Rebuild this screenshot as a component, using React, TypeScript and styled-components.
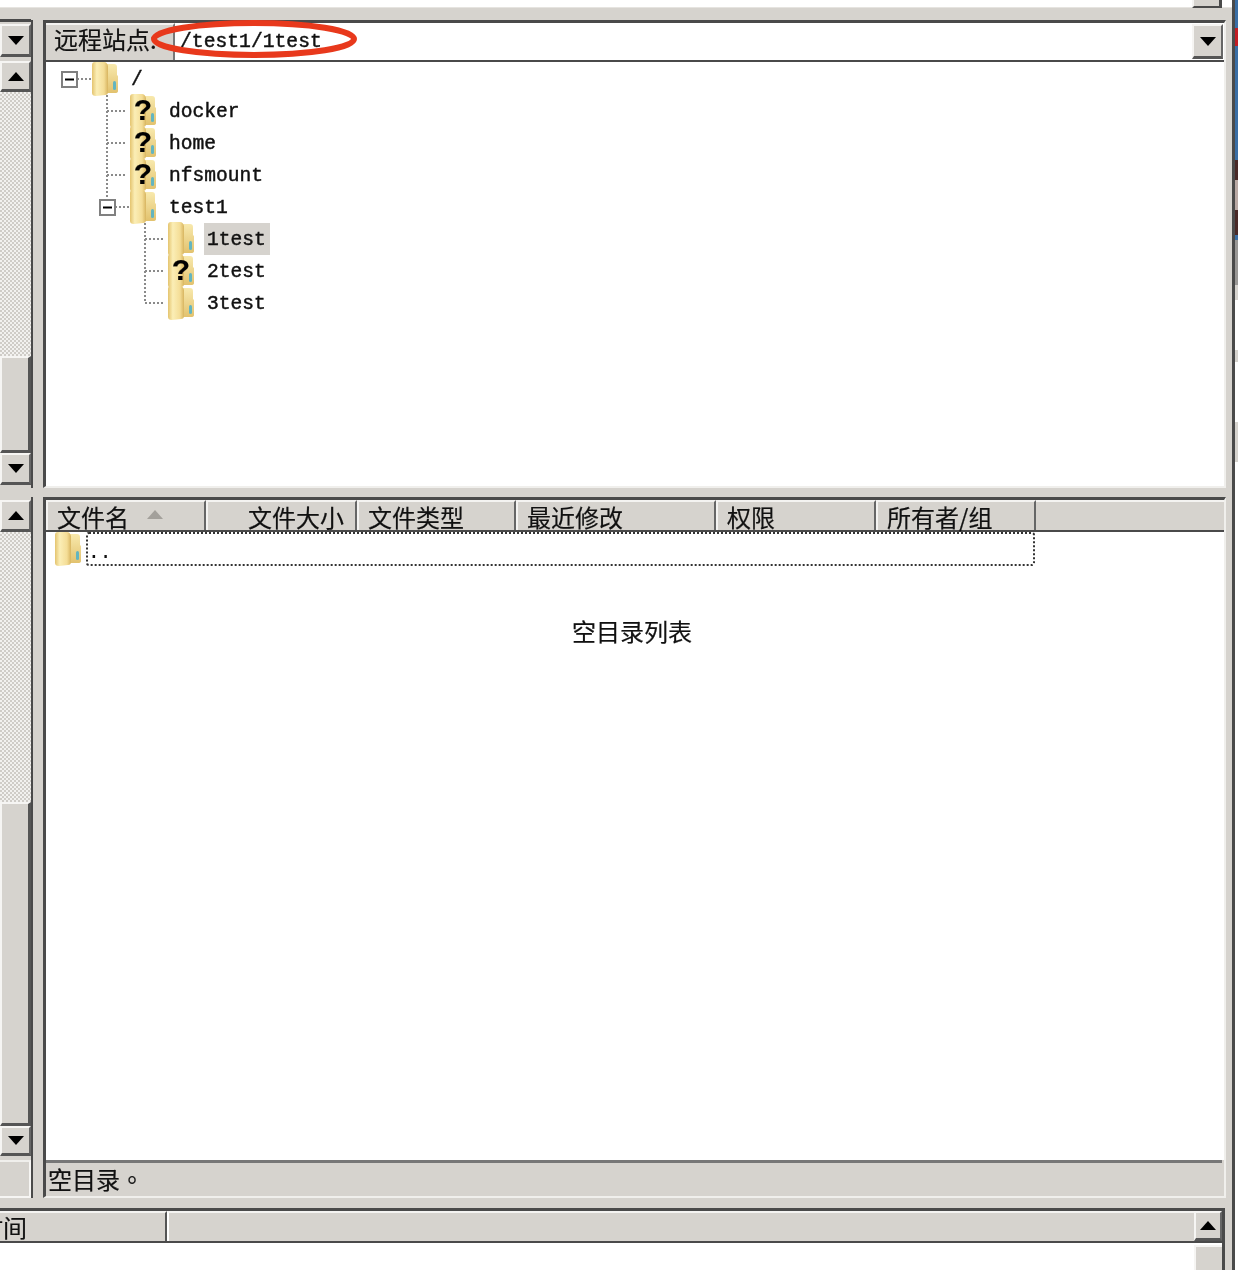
import React from "react";
import styled, { createGlobalStyle } from "styled-components";

const FACE = "#d6d3ce";
const DARK = "#4a4a4a";
const CJK = `"Noto Sans CJK SC", "Liberation Sans", sans-serif`;
const MONO = `"Liberation Mono", "DejaVu Sans Mono", monospace`;

const GlobalStyle = createGlobalStyle`
  html, body { margin: 0; padding: 0; background: #fff; }
  * { box-sizing: border-box; }
`;

const Page = styled.div`
  width: 1238px;
  height: 1270px;
  overflow: hidden;
  display: grid;
  grid-template-columns: 1235px 3px;
  font-family: ${CJK};
  color: #111;
  -webkit-text-stroke: 0.2px #111;
  filter: blur(0.45px);
`;

const Win = styled.div`
  display: flex;
  flex-direction: column;
  background: ${FACE};
  border-right: 3px solid ${DARK};
`;

const DesktopEdge = styled.div`
  display: flex;
  flex-direction: column;
  background: #fff;
`;

const EdgeSlice = styled.div<{ $h: number; $c: string }>`
  height: ${(p) => p.$h}px;
  background: ${(p) => p.$c};
  flex: none;
`;

const TopStrip = styled.div`
  height: 20px;
  flex: none;
`;

const TopWhite = styled.div`
  height: 8px;
  background: #fff;
  border-bottom: 1px solid #e6e4e0;
  display: flex;
  justify-content: flex-end;
  padding-right: 10px;
`;

const ButtonStub = styled.div`
  width: 30px;
  height: 8px;
  background: ${FACE};
  border-left: 2px solid #f4f3f1;
  border-right: 3px solid ${DARK};
  border-bottom: 2px solid ${DARK};
`;

const PaneRow = styled.div<{ $h: number }>`
  flex: none;
  height: ${(p) => p.$h}px;
  display: grid;
  grid-template-columns: 33px 10px 1183px;
`;

const Gutter = styled.div``;

const Splitter = styled.div<{ $h: number }>`
  flex: none;
  height: ${(p) => p.$h}px;
`;

const SideColumn = styled.div`
  display: flex;
  flex-direction: column;
  border-right: 2px solid ${DARK};
`;

const SideCap = styled.div`
  height: 3px;
  flex: none;
  margin-top: -1px;
  background: ${DARK};
`;

const WinButton = styled.div<{ $h?: number; $mt?: number }>`
  flex: none;
  height: ${(p) => p.$h ?? 31}px;
  margin-top: ${(p) => p.$mt ?? 0}px;
  background: ${FACE};
  border-top: 2px solid #f6f5f3;
  border-left: 2px solid #f6f5f3;
  border-right: 2px solid #666;
  border-bottom: 3px solid #555;
  display: flex;
  align-items: center;
  justify-content: center;
`;

const Arrow = styled.span<{ $up?: boolean }>`
  width: 0;
  height: 0;
  border-left: 8px solid transparent;
  border-right: 8px solid transparent;
  ${(p) => (p.$up ? "border-bottom: 9px solid #000;" : "border-top: 9px solid #000;")}
`;

const Track = styled.div`
  flex: 1;
  background: repeating-conic-gradient(#cfccc7 0 25%, #f2f1ef 0 50%) 0 0 / 4px 4px;
`;

const Thumb = styled.div<{ $h: number }>`
  flex: none;
  height: ${(p) => p.$h}px;
  background: ${FACE};
  border-top: 2px solid #f6f5f3;
  border-left: 2px solid #f6f5f3;
  border-right: 3px solid #555;
  border-bottom: 3px solid #555;
`;

const SideFoot = styled.div`
  flex: none;
  height: 38px;
  margin-top: 4px;
  border-top: 2px solid #f0efec;
  border-right: 2px solid #f6f5f3;
  border-bottom: 2px solid #f6f5f3;
`;

const Pane = styled.div`
  display: flex;
  flex-direction: column;
  border-top: 3px solid ${DARK};
  border-left: 3px solid ${DARK};
  border-right: 2px solid #f0efec;
  border-bottom: 2px solid #f0efec;
  min-height: 0;
`;

const AddressBar = styled.div`
  position: relative;
  flex: none;
  height: 39px;
  display: flex;
  background: #fff;
  border-bottom: 2px solid ${DARK};
`;

const AddressLabel = styled.div`
  width: 129px;
  flex: none;
  background: ${FACE};
  border-top: 2px solid #f4f3f1;
  border-right: 2px solid #777;
  padding-left: 8px;
  font-size: 24px;
  line-height: 27px;
  white-space: nowrap;
  overflow: hidden;
`;

const AddressValue = styled.div`
  flex: 1;
  padding: 3px 0 0 5px;
  font-family: ${MONO};
  font-size: 19.7px;
  line-height: 32px;
  -webkit-text-stroke: 0.45px #111;
`;

const ComboButton = styled(WinButton)`
  width: 31px;
  height: 35px;
  margin: 1px 1px 0 0;
`;

const RedRing = styled.svg`
  position: absolute;
  left: 104px;
  top: -6px;
  pointer-events: none;
`;

const Tree = styled.div`
  flex: 1;
  background: #fff;
  padding-top: 1px;
`;

const TreeRow = styled.div`
  height: 32px;
  display: flex;
  align-items: center;
`;

const TreeLabel = styled.span<{ $sel?: boolean }>`
  margin-left: 10px;
  padding: 0 4px 0 3px;
  height: 32px;
  line-height: 35px;
  font-family: ${MONO};
  font-size: 19.6px;
  -webkit-text-stroke: 0.45px #111;
  background: ${(p) => (p.$sel ? "#d6d3ce" : "transparent")};
`;

const FolderWrap = styled.span`
  position: relative;
  display: block;
  width: 26px;
  height: 34px;
  flex: none;
`;

const Unknown = styled.span`
  position: absolute;
  left: 0;
  right: 0;
  top: -1px;
  text-align: center;
  font-family: "Liberation Sans", sans-serif;
  font-weight: 700;
  font-size: 30px;
  line-height: 34px;
  color: #000;
`;

const FileList = styled.div`
  flex: 1;
  background: #fff;
  min-height: 0;
`;

const Header = styled.div`
  height: 32px;
  display: grid;
  grid-template-columns: 160px 151px 159px 200px 160px 160px 1fr;
  border-bottom: 2px solid ${DARK};
  background: ${FACE};
`;

const HeaderCell = styled.div<{ $right?: boolean }>`
  position: relative;
  border-top: 2px solid #f4f3f1;
  border-left: 2px solid #f4f3f1;
  border-right: 2px solid #666;
  padding: 0 ${(p) => (p.$right ? "11px" : "0")} 0 9px;
  font-size: 24px;
  line-height: 29px;
  height: 30px;
  white-space: nowrap;
  text-align: ${(p) => (p.$right ? "right" : "left")};
`;

const HeaderFill = styled.div`
  border-top: 2px solid #f4f3f1;
`;

const SortMark = styled.span`
  position: absolute;
  left: 99px;
  top: 8px;
  width: 0;
  height: 0;
  border-left: 8px solid transparent;
  border-right: 8px solid transparent;
  border-bottom: 9px solid #a3a09b;
`;

const ParentRow = styled.div`
  display: flex;
  align-items: flex-start;
  padding-left: 9px;
  height: 34px;
`;

const FocusBox = styled.div`
  width: 949px;
  height: 34px;
  margin-left: 5px;
  border: 2px dotted #333;
  border-radius: 3px;
  font-family: ${MONO};
  font-size: 19.6px;
  line-height: 38px;
  text-indent: 0;
`;

const EmptyText = styled.div`
  text-align: center;
  padding: 47px 6px 0 0;
  font-size: 24px;
  line-height: 36px;
`;

const StatusBar = styled.div`
  flex: none;
  height: 36px;
  margin-right: 2px;
  border-top: 3px solid #777;
  background: ${FACE};
  padding-left: 2px;
  font-family: "Noto Sans CJK TC", "Noto Sans CJK SC", sans-serif;
  font-size: 24px;
  line-height: 32px;
`;

const LogPane = styled.div`
  flex: 1;
  margin-right: 7px;
  background: #fff;
  border-right: 3px solid ${DARK};
  display: flex;
  flex-direction: column;
`;

const LogHeader = styled.div`
  flex: none;
  height: 35px;
  display: grid;
  grid-template-columns: 167px 1fr 28px;
  background: ${FACE};
  border-top: 3px solid ${DARK};
  border-bottom: 2px solid ${DARK};
`;

const LogCell = styled.div`
  border-top: 2px solid #f4f3f1;
  border-right: 2px solid #555;
  overflow: hidden;
  white-space: nowrap;
  font-size: 24px;
  line-height: 27px;
  text-indent: -21px;
`;

const LogFill = styled.div`
  border-top: 2px solid #f4f3f1;
  border-left: 2px solid #fff;
`;

const LogBody = styled.div`
  flex: 1;
  display: flex;
  justify-content: flex-end;
  padding-top: 2px;
`;

const LogThumb = styled.div`
  width: 28px;
  background: ${FACE};
  border-top: 2px solid #f6f5f3;
  border-left: 2px solid #f6f5f3;
`;

type Node = {
  label: string;
  depth: number;
  unknown?: boolean;
  expanded?: boolean;
  selected?: boolean;
  last?: boolean;
};

const NODES: Node[] = [
  { label: "/", depth: 0, expanded: true },
  { label: "docker", depth: 1, unknown: true },
  { label: "home", depth: 1, unknown: true },
  { label: "nfsmount", depth: 1, unknown: true },
  { label: "test1", depth: 1, expanded: true, last: true },
  { label: "1test", depth: 2, selected: true },
  { label: "2test", depth: 2, unknown: true },
  { label: "3test", depth: 2, last: true },
];

const COLUMNS = ["文件名", "文件大小", "文件类型", "最近修改", "权限", "所有者/组"];

const EDGE: [number, string][] = [
  [28, "#3a6ea5"],
  [18, "#c21d24"],
  [114, "#3a6ea5"],
  [20, "#4a2a28"],
  [30, "#b9a9a4"],
  [25, "#4a2a28"],
  [5, "#3a6ea5"],
  [45, "#9a9896"],
  [15, "#d6d3ce"],
  [50, "#fff"],
  [12, "#d6d3ce"],
  [60, "#fff"],
  [40, "#d6d3ce"],
];

const Folder = ({ unknown }: { unknown?: boolean }) => (
  <FolderWrap>
    <svg width="26" height="34" viewBox="0 0 26 34">
      <defs>
        <linearGradient id="leaf" x1="0" y1="0" x2="1" y2="0">
          <stop offset="0" stopColor="#e4c46f" />
          <stop offset="0.3" stopColor="#fbeeb6" />
          <stop offset="0.75" stopColor="#f4dd96" />
          <stop offset="1" stopColor="#d8b560" />
        </linearGradient>
        <linearGradient id="back" x1="0" y1="0" x2="0" y2="1">
          <stop offset="0" stopColor="#f8e9ad" />
          <stop offset="1" stopColor="#e2c26e" />
        </linearGradient>
      </defs>
      <path d="M14 2h8q3 0 3 3v8l1 1v15q0 2-3 2H14z" fill="url(#back)" />
      <path d="M0 3q0-3 3-3h9q3 0 4 4v26q0 3-3 3l-9 1q-4 0-4-3z" fill="url(#leaf)" />
      <rect x="21" y="19" width="3" height="9" rx="1.5" fill="#63b5c0" />
    </svg>
    {unknown && <Unknown>?</Unknown>}
  </FolderWrap>
);

// dotted guides and the +/- box left of a tree folder
const TreeGuide = ({ node }: { node: Node }) => {
  const width = 46 + node.depth * 38;
  const dots = { stroke: "#8a8a8a", strokeWidth: 2, strokeDasharray: "2 2" };
  const stemX = 23 + node.depth * 38;
  const boxX = 15 + (node.depth === 0 ? 0 : 38);
  return (
    <svg width={width} height="32" viewBox={`0 0 ${width} 32`} style={{ flex: "none" }}>
      {node.depth > 0 && !node.expanded && (
        <>
          <line x1={stemX} y1="0" x2={stemX} y2={node.last ? 16 : 32} {...dots} />
          <line x1={stemX} y1="16" x2={width - 3} y2="16" {...dots} />
        </>
      )}
      {node.depth === 1 && node.expanded && <line x1="61" y1="0" x2="61" y2="8" {...dots} />}
      {node.expanded && (
        <>
          <line x1={boxX + 16} y1="16" x2={width} y2="16" {...dots} />
          <rect x={boxX + 1} y="9" width="15" height="15" fill="#fff" stroke="#808080" strokeWidth="2" />
          <line x1={boxX + 4} y1="16.5" x2={boxX + 13} y2="16.5" stroke="#000" strokeWidth="2" />
        </>
      )}
    </svg>
  );
};

export default function App() {
  return (
    <Page>
      <GlobalStyle />
      <Win>
        <TopStrip>
          <TopWhite>
            <ButtonStub />
          </TopWhite>
        </TopStrip>

        <PaneRow $h={468}>
          <SideColumn>
            <SideCap />
            <WinButton $mt={2} $h={33}>
              <Arrow />
            </WinButton>
            <WinButton $mt={4} $h={31}>
              <Arrow $up />
            </WinButton>
            <Track />
            <Thumb $h={97} />
            <WinButton $h={32}>
              <Arrow />
            </WinButton>
            <Splitter $h={3} />
          </SideColumn>
          <Gutter />
          <Pane>
            <AddressBar>
              <AddressLabel>远程站点:</AddressLabel>
              <AddressValue>/test1/1test</AddressValue>
              <ComboButton>
                <Arrow />
              </ComboButton>
              <RedRing width="212" height="50" viewBox="0 0 212 50">
                <ellipse cx="104" cy="22" rx="100" ry="16" fill="none" stroke="#e8391c" strokeWidth="6" />
              </RedRing>
            </AddressBar>
            <Tree>
              {NODES.map((node) => (
                <TreeRow key={node.label}>
                  <TreeGuide node={node} />
                  <Folder unknown={node.unknown} />
                  <TreeLabel $sel={node.selected}>{node.label}</TreeLabel>
                </TreeRow>
              ))}
            </Tree>
          </Pane>
        </PaneRow>

        <Splitter $h={9} />

        <PaneRow $h={701}>
          <SideColumn>
            <WinButton $mt={3} $h={32}>
              <Arrow $up />
            </WinButton>
            <Track />
            <Thumb $h={324} />
            <WinButton $h={30}>
              <Arrow />
            </WinButton>
            <SideFoot />
          </SideColumn>
          <Gutter />
          <Pane>
            <FileList>
              <Header>
                {COLUMNS.map((title, i) => (
                  <HeaderCell key={title} $right={i === 1}>
                    {title}
                    {i === 0 && <SortMark />}
                  </HeaderCell>
                ))}
                <HeaderFill />
              </Header>
              <ParentRow>
                <Folder />
                <FocusBox>..</FocusBox>
              </ParentRow>
              <EmptyText>空目录列表</EmptyText>
            </FileList>
            <StatusBar>空目录。</StatusBar>
          </Pane>
        </PaneRow>

        <Splitter $h={10} />

        <LogPane>
          <LogHeader>
            <LogCell>时间</LogCell>
            <LogFill />
            <WinButton $h={30}>
              <Arrow $up />
            </WinButton>
          </LogHeader>
          <LogBody>
            <LogThumb />
          </LogBody>
        </LogPane>
      </Win>

      <DesktopEdge>
        {EDGE.map(([h, c], i) => (
          <EdgeSlice key={i} $h={h} $c={c} />
        ))}
      </DesktopEdge>
    </Page>
  );
}
